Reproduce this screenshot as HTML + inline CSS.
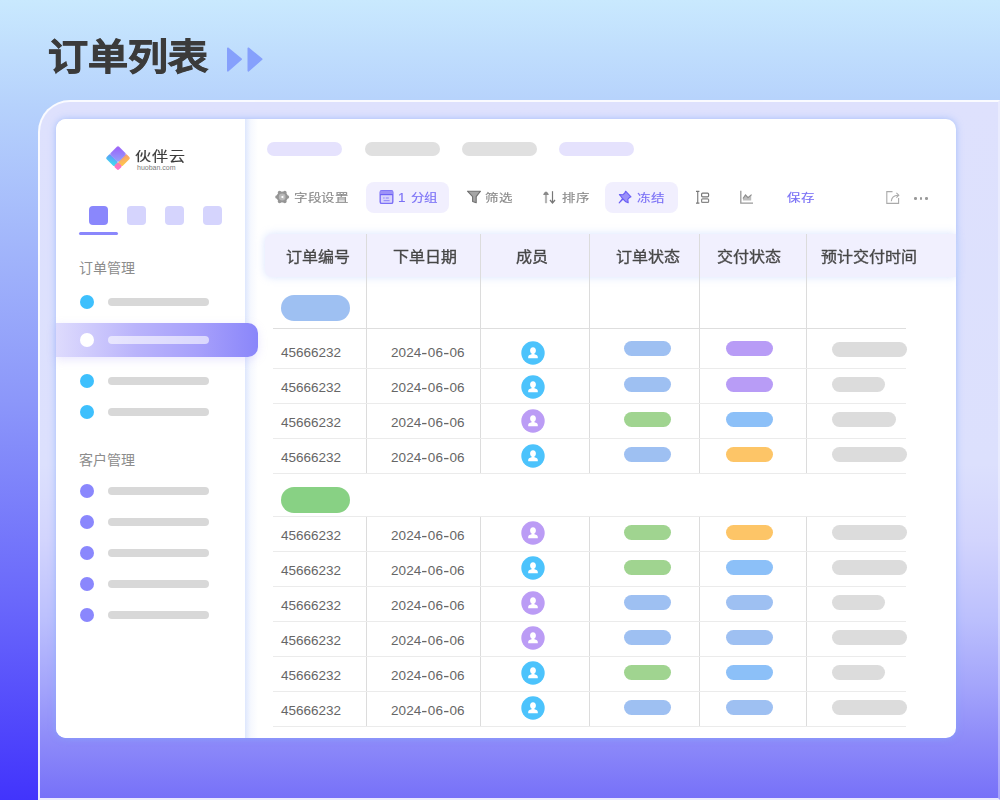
<!DOCTYPE html>
<html lang="zh-CN">
<head>
<meta charset="utf-8">
<style>
*{margin:0;padding:0;box-sizing:border-box;}
html,body{width:1000px;height:800px;overflow:hidden;}
body{position:relative;font-family:"Liberation Sans",sans-serif;
 background:linear-gradient(180deg,#c9e9fe 0%,#b6d2fc 13%,#8c97fa 50%,#6a68fb 75%,#4234fc 100%);}
.a{position:absolute;}
.title{left:48px;top:28px;font-size:40px;font-weight:900;color:#3b3b3b;line-height:56px;letter-spacing:0px;transform:scaleY(0.92);transform-origin:0 40px;-webkit-text-stroke:0.9px #3b3b3b;}
.panel{left:38px;top:100px;width:962px;height:700px;border:2px solid rgba(255,255,255,0.85);border-radius:32px 0 0 0;
 background:linear-gradient(180deg,#dee1fd 0%,#dce0fd 52%,#d2d4fd 63%,#bcc0fd 74%,#a3a4fb 84%,#8f8cf9 91%,#7670f8 100%) border-box;border-right-color:rgba(255,255,255,0.35);}
.card{left:56px;top:119px;width:900px;height:619px;background:#fff;border-radius:10px;overflow:hidden;box-shadow:0 0 7px rgba(130,170,250,0.65);}
.side{left:0;top:0;width:189px;height:619px;background:#fff;}
.pill{position:absolute;border-radius:99px;}
.txt{position:absolute;white-space:nowrap;}
</style>
</head>
<body>
<div class="a title">订单列表</div>
<svg class="a" style="left:226px;top:46px" width="38" height="26" viewBox="0 0 38 26">
 <path d="M1.8 2.2 L15.2 13.2 L1.8 24.8 Z" fill="#86a0fc" stroke="#86a0fc" stroke-width="1.6" stroke-linejoin="round"/>
 <path d="M22.3 2.2 L35.7 13.2 L22.3 24.8 Z" fill="#86a0fc" stroke="#86a0fc" stroke-width="1.6" stroke-linejoin="round"/>
</svg>
<div class="a panel"></div>
<div class="a card">
 <div class="a side"></div>
</div>

<div class="a" style="left:245px;top:119px;width:13px;height:619px;background:linear-gradient(90deg,rgba(222,231,253,1),rgba(240,244,254,0.6) 45%,rgba(255,255,255,0) 100%);"></div>
<svg class="a" style="left:104px;top:144px" width="28" height="28" viewBox="0 0 28 28">
 <defs>
  <linearGradient id="gp" x1="0" y1="0" x2="1" y2="1"><stop offset="0" stop-color="#9c5cfa"/><stop offset="1" stop-color="#93a3fb"/></linearGradient>
  <linearGradient id="gb" x1="0" y1="0" x2="1" y2="1"><stop offset="0" stop-color="#5f95f6"/><stop offset="1" stop-color="#3ee3f1"/></linearGradient>
  <linearGradient id="go" x1="0" y1="0" x2="1" y2="1"><stop offset="0" stop-color="#f79b72"/><stop offset="1" stop-color="#ffcb47"/></linearGradient>
  <linearGradient id="gk" x1="0" y1="0" x2="1" y2="1"><stop offset="0" stop-color="#fb7ca8"/><stop offset="1" stop-color="#ff6fcf"/></linearGradient>
 </defs>
 <g transform="translate(14,1.6) rotate(45)">
  <rect x="0" y="11.6" width="12" height="6" rx="1.6" fill="url(#gb)"/>
  <rect x="11.6" y="0" width="6" height="12" rx="1.6" fill="url(#go)"/>
  <rect x="11.6" y="11.6" width="6" height="6" rx="1.6" fill="url(#gk)"/>
  <rect x="0" y="0" width="12" height="12" rx="2" fill="url(#gp)" style="filter:drop-shadow(0.5px 0.5px 0.4px rgba(90,60,160,0.35))"/>
 </g>
</svg>
<div class="txt" style="left:135px;top:145px;font-size:16px;line-height:22px;color:#3c3c3c;letter-spacing:0.8px;-webkit-text-stroke:0.2px #3c3c3c;transform:scaleY(0.82);transform-origin:0 18px;">伙伴云</div>
<div class="txt" style="left:137px;top:163px;font-size:7px;line-height:9px;color:#7a7a7a;letter-spacing:0px;">huoban.com</div>
<div class="a" style="left:89px;top:206px;width:19px;height:19px;border-radius:4px;background:#8a87fc"></div>
<div class="a" style="left:127px;top:206px;width:19px;height:19px;border-radius:4px;background:#d5d4fd"></div>
<div class="a" style="left:165px;top:206px;width:19px;height:19px;border-radius:4px;background:#d5d4fd"></div>
<div class="a" style="left:203px;top:206px;width:19px;height:19px;border-radius:4px;background:#d5d4fd"></div>
<div class="a" style="left:79px;top:232px;width:39px;height:3px;border-radius:2px;background:#8a87fc"></div>
<div class="txt" style="left:79px;top:258px;font-size:14px;line-height:20px;color:#8c8c8c;">订单管理</div>
<div class="a" style="left:80px;top:295px;width:14px;height:14px;border-radius:50%;background:#3ec0fd"></div>
<div class="pill" style="left:108px;top:298px;width:101px;height:8px;background:#d8d8d8"></div>
<div class="a" style="left:56px;top:323px;width:202px;height:34px;border-radius:0 10px 10px 0;background:linear-gradient(90deg,#dedbfd 0%,#b9b3fb 40%,#a7a0fb 70%,#8a86fa 100%);box-shadow:0 3px 10px rgba(170,160,250,0.25);"></div>
<div class="a" style="left:80px;top:333px;width:14px;height:14px;border-radius:50%;background:#fff"></div>
<div class="pill" style="left:108px;top:336px;width:101px;height:8px;background:rgba(255,255,255,0.6)"></div>
<div class="a" style="left:80px;top:374px;width:14px;height:14px;border-radius:50%;background:#3ec0fd"></div>
<div class="pill" style="left:108px;top:377px;width:101px;height:8px;background:#d8d8d8"></div>
<div class="a" style="left:80px;top:405px;width:14px;height:14px;border-radius:50%;background:#3ec0fd"></div>
<div class="pill" style="left:108px;top:408px;width:101px;height:8px;background:#d8d8d8"></div>
<div class="txt" style="left:79px;top:450px;font-size:14px;line-height:20px;color:#8c8c8c;">客户管理</div>
<div class="a" style="left:80px;top:484px;width:14px;height:14px;border-radius:50%;background:#8a87fd"></div>
<div class="pill" style="left:108px;top:487px;width:101px;height:8px;background:#d8d8d8"></div>
<div class="a" style="left:80px;top:515px;width:14px;height:14px;border-radius:50%;background:#8a87fd"></div>
<div class="pill" style="left:108px;top:518px;width:101px;height:8px;background:#d8d8d8"></div>
<div class="a" style="left:80px;top:546px;width:14px;height:14px;border-radius:50%;background:#8a87fd"></div>
<div class="pill" style="left:108px;top:549px;width:101px;height:8px;background:#d8d8d8"></div>
<div class="a" style="left:80px;top:577px;width:14px;height:14px;border-radius:50%;background:#8a87fd"></div>
<div class="pill" style="left:108px;top:580px;width:101px;height:8px;background:#d8d8d8"></div>
<div class="a" style="left:80px;top:608px;width:14px;height:14px;border-radius:50%;background:#8a87fd"></div>
<div class="pill" style="left:108px;top:611px;width:101px;height:8px;background:#d8d8d8"></div>

<div class="pill" style="left:267px;top:142px;width:75px;height:14px;background:#e5e2fd"></div>
<div class="pill" style="left:365px;top:142px;width:75px;height:14px;background:#e0e0e0"></div>
<div class="pill" style="left:462px;top:142px;width:75px;height:14px;background:#e0e0e0"></div>
<div class="pill" style="left:559px;top:142px;width:75px;height:14px;background:#e5e2fd"></div>
<svg class="a" style="left:274px;top:189px" width="16" height="16" viewBox="0 0 16 16">
 <g fill="#959595">
  <circle cx="8.2" cy="8" r="5.6"/>
  <circle cx="13.4" cy="8" r="1.8"/><circle cx="10.8" cy="12.5" r="1.8"/><circle cx="5.6" cy="12.5" r="1.8"/>
  <circle cx="3" cy="8" r="1.8"/><circle cx="5.6" cy="3.5" r="1.8"/><circle cx="10.8" cy="3.5" r="1.8"/>
 </g>
 <circle cx="8.2" cy="8" r="3.4" fill="#b8b8b8"/>
 <path d="M6.6 8 L9.4 6.4 L9.4 9.6 Z" fill="#fff"/>
</svg>
<div class="txt" style="left:294px;top:188px;font-size:13.5px;line-height:20px;font-weight:500;letter-spacing:0.7px;-webkit-text-stroke-width:0.15px;transform:scaleY(0.88);transform-origin:0 16px;color:#8a8a8a;">字段设置</div>
<div class="a" style="left:366px;top:182px;width:83px;height:31px;border-radius:8px;background:#f1effe"></div>
<svg class="a" style="left:378px;top:189px" width="16" height="16" viewBox="0 0 16 16">
 <rect x="2.2" y="1.8" width="12.6" height="12.6" rx="1.5" fill="#d9d4fc" stroke="#7b6ff6" stroke-width="1.4"/>
 <rect x="2.2" y="1.8" width="12.6" height="4" rx="1.2" fill="#9d92f8"/>
 <line x1="2.2" y1="5.6" x2="14.8" y2="5.6" stroke="#6e62f5" stroke-width="1.2"/>
 <line x1="5.2" y1="9" x2="6.6" y2="9" stroke="#8a80f7" stroke-width="1"/>
 <line x1="7.8" y1="9" x2="10.8" y2="9" stroke="#8a80f7" stroke-width="1"/>
 <line x1="5.6" y1="11.7" x2="11.6" y2="11.7" stroke="#8a80f7" stroke-width="1"/>
</svg>
<div class="txt" style="left:398px;top:188px;font-size:13.5px;line-height:20px;font-weight:500;letter-spacing:0.7px;-webkit-text-stroke-width:0.15px;transform:scaleY(0.88);transform-origin:0 16px;color:#7a70f5;">1&nbsp;分组</div>
<svg class="a" style="left:466px;top:189px" width="16" height="16" viewBox="0 0 16 16">
 <path d="M1.5 2.2 L14.5 2.2 L10.2 7.6 L10.2 13.8 L6.6 12.6 L6.6 7.6 Z" fill="#a5a5a5" stroke="#707070" stroke-width="1.1" stroke-linejoin="round"/>
</svg>
<div class="txt" style="left:485px;top:188px;font-size:13.5px;line-height:20px;font-weight:500;letter-spacing:0.7px;-webkit-text-stroke-width:0.15px;transform:scaleY(0.88);transform-origin:0 16px;color:#8a8a8a;">筛选</div>
<svg class="a" style="left:542px;top:189px" width="16" height="16" viewBox="0 0 16 16">
 <path d="M4 14.2 L4 5" stroke="#b5b5b5" stroke-width="2.2"/>
 <path d="M1.2 6 C1.6 4.4 2.6 3 4 2.6 C5.4 3 6.4 4.4 6.8 6 Z" fill="#8a8a8a"/>
 <path d="M10.5 2.2 L10.5 13.6" stroke="#777" stroke-width="1.2"/>
 <path d="M8 11 L10.5 14 L13 11" fill="none" stroke="#777" stroke-width="1.3"/>
</svg>
<div class="txt" style="left:562px;top:188px;font-size:13.5px;line-height:20px;font-weight:500;letter-spacing:0.7px;-webkit-text-stroke-width:0.15px;transform:scaleY(0.88);transform-origin:0 16px;color:#8a8a8a;">排序</div>
<div class="a" style="left:605px;top:182px;width:73px;height:31px;border-radius:8px;background:#f1effe"></div>
<svg class="a" style="left:617px;top:189px" width="16" height="16" viewBox="0 0 16 16">
 <path d="M8.6 2.2 L14 7.8 L12.6 8.4 L10.8 10.4 L11.2 13.8 L8.8 12.8 L6 10 L2.2 13.8 L5.6 9.6 L3.6 7 L2.4 5.6 L5.8 5.8 L7.8 4 Z" fill="#9b90f9" stroke="#6a5ef5" stroke-width="1.1" stroke-linejoin="round"/>
</svg>
<div class="txt" style="left:637px;top:188px;font-size:13.5px;line-height:20px;font-weight:500;letter-spacing:0.7px;-webkit-text-stroke-width:0.15px;transform:scaleY(0.88);transform-origin:0 16px;color:#7a70f5;">冻结</div>
<svg class="a" style="left:694px;top:189px" width="16" height="16" viewBox="0 0 16 16">
 <path d="M3.7 2.5 L3.7 14" stroke="#8a8a8a" stroke-width="1.3"/>
 <path d="M2 2.3 L5.4 2.3 M2 14.2 L5.4 14.2" stroke="#777" stroke-width="1.2"/>
 <rect x="7.6" y="4.2" width="7" height="3.6" rx="1" fill="none" stroke="#777" stroke-width="1.2"/>
 <rect x="7.6" y="9.8" width="7" height="3.6" rx="1" fill="none" stroke="#888" stroke-width="1.2"/>
</svg>
<svg class="a" style="left:738px;top:189px" width="16" height="16" viewBox="0 0 16 16">
 <path d="M2.8 1.8 L2.8 14.2 L15 14.2" fill="none" stroke="#999" stroke-width="1.3"/>
 <path d="M5 11.5 L5 9 L7.5 5.8 L10 8.5 L13.2 5.8 L13.2 11.5 Z" fill="#bdbdbd"/>
 <path d="M5 9.5 L7.5 6 L10 8.6 L13.6 5.6" fill="none" stroke="#8e8e8e" stroke-width="1.2"/>
</svg>
<div class="txt" style="left:787px;top:188px;font-size:13.5px;line-height:20px;font-weight:500;letter-spacing:0.7px;-webkit-text-stroke-width:0.15px;transform:scaleY(0.88);transform-origin:0 16px;color:#7a70f5;">保存</div>
<svg class="a" style="left:884px;top:189px" width="18" height="18" viewBox="0 0 18 18">
 <path d="M8.5 2.6 L2.8 2.6 L2.8 14.4 L14.6 14.4 L14.6 9" fill="none" stroke="#aaa" stroke-width="1.1"/>
 <path d="M7.3 12.2 C7.6 8.6 10 6.4 14 6.2" fill="none" stroke="#aaa" stroke-width="1.1"/>
 <path d="M12.4 3.8 L14.8 6.2 L12.4 8.6" fill="none" stroke="#aaa" stroke-width="1.1"/>
</svg>
<div class="a" style="left:914.2px;top:197.2px;width:2.6px;height:2.6px;border-radius:50%;background:#999"></div>
<div class="a" style="left:919.7px;top:197.2px;width:2.6px;height:2.6px;border-radius:50%;background:#999"></div>
<div class="a" style="left:925.2px;top:197.2px;width:2.6px;height:2.6px;border-radius:50%;background:#999"></div>
<!--TABLE-->
<div class="a" style="left:265px;top:234px;width:691px;height:43px;border-radius:7px 0 0 7px;background:#f1f0fe;box-shadow:0 0 8px rgba(200,215,253,0.7);"></div>
<div class="txt" style="left:286px;top:244.5px;font-size:16px;line-height:24px;color:#474747;font-weight:500;-webkit-text-stroke:0.35px #474747;transform:scaleY(0.9);transform-origin:0 19px;">订单编号</div>
<div class="txt" style="left:392.5px;top:244.5px;font-size:16px;line-height:24px;color:#474747;font-weight:500;-webkit-text-stroke:0.35px #474747;transform:scaleY(0.9);transform-origin:0 19px;">下单日期</div>
<div class="txt" style="left:515.5px;top:244.5px;font-size:16px;line-height:24px;color:#474747;font-weight:500;-webkit-text-stroke:0.35px #474747;transform:scaleY(0.9);transform-origin:0 19px;">成员</div>
<div class="txt" style="left:615.5px;top:244.5px;font-size:16px;line-height:24px;color:#474747;font-weight:500;-webkit-text-stroke:0.35px #474747;transform:scaleY(0.9);transform-origin:0 19px;">订单状态</div>
<div class="txt" style="left:717px;top:244.5px;font-size:16px;line-height:24px;color:#474747;font-weight:500;-webkit-text-stroke:0.35px #474747;transform:scaleY(0.9);transform-origin:0 19px;">交付状态</div>
<div class="txt" style="left:821px;top:244.5px;font-size:16px;line-height:24px;color:#474747;font-weight:500;-webkit-text-stroke:0.35px #474747;transform:scaleY(0.9);transform-origin:0 19px;">预计交付时间</div>
<div class="a" style="left:366px;top:234px;width:1px;height:240px;background:#dcdcdc"></div>
<div class="a" style="left:366px;top:517px;width:1px;height:210px;background:#dcdcdc"></div>
<div class="a" style="left:480px;top:234px;width:1px;height:240px;background:#dcdcdc"></div>
<div class="a" style="left:480px;top:517px;width:1px;height:210px;background:#dcdcdc"></div>
<div class="a" style="left:589px;top:234px;width:1px;height:240px;background:#dcdcdc"></div>
<div class="a" style="left:589px;top:517px;width:1px;height:210px;background:#dcdcdc"></div>
<div class="a" style="left:699px;top:234px;width:1px;height:240px;background:#dcdcdc"></div>
<div class="a" style="left:699px;top:517px;width:1px;height:210px;background:#dcdcdc"></div>
<div class="a" style="left:806px;top:234px;width:1px;height:240px;background:#dcdcdc"></div>
<div class="a" style="left:806px;top:517px;width:1px;height:210px;background:#dcdcdc"></div>
<div class="pill" style="left:281px;top:295px;width:69px;height:26px;background:#9ec0f2"></div>
<div class="pill" style="left:281px;top:487px;width:69px;height:26px;background:#88d184"></div>
<div class="a" style="left:273px;top:328px;width:633px;height:1px;background:#dedede"></div>
<div class="a" style="left:273px;top:368px;width:633px;height:1px;background:#ebebeb"></div>
<div class="a" style="left:273px;top:403px;width:633px;height:1px;background:#ebebeb"></div>
<div class="a" style="left:273px;top:438px;width:633px;height:1px;background:#ebebeb"></div>
<div class="a" style="left:273px;top:473px;width:633px;height:1px;background:#ebebeb"></div>
<div class="a" style="left:273px;top:516px;width:633px;height:1px;background:#ebebeb"></div>
<div class="a" style="left:273px;top:551px;width:633px;height:1px;background:#ebebeb"></div>
<div class="a" style="left:273px;top:586px;width:633px;height:1px;background:#ebebeb"></div>
<div class="a" style="left:273px;top:621px;width:633px;height:1px;background:#ebebeb"></div>
<div class="a" style="left:273px;top:656px;width:633px;height:1px;background:#ebebeb"></div>
<div class="a" style="left:273px;top:691px;width:633px;height:1px;background:#ebebeb"></div>
<div class="a" style="left:273px;top:726px;width:633px;height:1px;background:#ebebeb"></div>
<div class="txt" style="left:281px;top:342.5px;font-size:13.5px;line-height:20px;color:#666;">45666232</div>
<div class="txt" style="left:391px;top:342.5px;font-size:13.5px;line-height:20px;color:#666;letter-spacing:0.1px;">2024<span style="display:inline-block;margin:0 0.9px;transform:scale(1.35,1.2)">-</span>06<span style="display:inline-block;margin:0 0.9px;transform:scale(1.35,1.2)">-</span>06</div>
<div class="a" style="left:520.5px;top:340.6px;width:24px;height:24px;"><svg width="24" height="24" viewBox="0 0 24 24" style="position:absolute;left:0;top:0"><circle cx="12" cy="12" r="11.7" fill="#4cc3fc"/><path d="M12 6.2 C13.9 6.2 14.9 7.6 14.9 9.5 C14.9 11 14.2 12.1 13.4 12.6 L13.4 13.3 C15.6 13.8 16.8 14.8 16.8 16 L16.8 17.3 L7.2 17.3 L7.2 16 C7.2 14.8 8.4 13.8 10.6 13.3 L10.6 12.6 C9.8 12.1 9.1 11 9.1 9.5 C9.1 7.6 10.1 6.2 12 6.2 Z" fill="#fff"/></svg></div>
<div class="pill" style="left:624px;top:341px;width:47px;height:14.5px;background:#9ec0f2"></div>
<div class="pill" style="left:726px;top:341px;width:47px;height:14.5px;background:#b89cf6"></div>
<div class="pill" style="left:832px;top:342px;width:75px;height:14.5px;background:#dcdcdc"></div>
<div class="txt" style="left:281px;top:377.5px;font-size:13.5px;line-height:20px;color:#666;">45666232</div>
<div class="txt" style="left:391px;top:377.5px;font-size:13.5px;line-height:20px;color:#666;letter-spacing:0.1px;">2024<span style="display:inline-block;margin:0 0.9px;transform:scale(1.35,1.2)">-</span>06<span style="display:inline-block;margin:0 0.9px;transform:scale(1.35,1.2)">-</span>06</div>
<div class="a" style="left:520.5px;top:374.7px;width:24px;height:24px;"><svg width="24" height="24" viewBox="0 0 24 24" style="position:absolute;left:0;top:0"><circle cx="12" cy="12" r="11.7" fill="#4cc3fc"/><path d="M12 6.2 C13.9 6.2 14.9 7.6 14.9 9.5 C14.9 11 14.2 12.1 13.4 12.6 L13.4 13.3 C15.6 13.8 16.8 14.8 16.8 16 L16.8 17.3 L7.2 17.3 L7.2 16 C7.2 14.8 8.4 13.8 10.6 13.3 L10.6 12.6 C9.8 12.1 9.1 11 9.1 9.5 C9.1 7.6 10.1 6.2 12 6.2 Z" fill="#fff"/></svg></div>
<div class="pill" style="left:624px;top:377px;width:47px;height:14.5px;background:#9ec0f2"></div>
<div class="pill" style="left:726px;top:377px;width:47px;height:14.5px;background:#b89cf6"></div>
<div class="pill" style="left:832px;top:377px;width:53px;height:14.5px;background:#dcdcdc"></div>
<div class="txt" style="left:281px;top:413px;font-size:13.5px;line-height:20px;color:#666;">45666232</div>
<div class="txt" style="left:391px;top:413px;font-size:13.5px;line-height:20px;color:#666;letter-spacing:0.1px;">2024<span style="display:inline-block;margin:0 0.9px;transform:scale(1.35,1.2)">-</span>06<span style="display:inline-block;margin:0 0.9px;transform:scale(1.35,1.2)">-</span>06</div>
<div class="a" style="left:520.5px;top:408.7px;width:24px;height:24px;"><svg width="24" height="24" viewBox="0 0 24 24" style="position:absolute;left:0;top:0"><circle cx="12" cy="12" r="11.7" fill="#bb9cf5"/><path d="M12 6.2 C13.9 6.2 14.9 7.6 14.9 9.5 C14.9 11 14.2 12.1 13.4 12.6 L13.4 13.3 C15.6 13.8 16.8 14.8 16.8 16 L16.8 17.3 L7.2 17.3 L7.2 16 C7.2 14.8 8.4 13.8 10.6 13.3 L10.6 12.6 C9.8 12.1 9.1 11 9.1 9.5 C9.1 7.6 10.1 6.2 12 6.2 Z" fill="#fff"/></svg></div>
<div class="pill" style="left:624px;top:412px;width:47px;height:14.5px;background:#a0d490"></div>
<div class="pill" style="left:726px;top:412px;width:47px;height:14.5px;background:#8cc0f8"></div>
<div class="pill" style="left:832px;top:412px;width:64px;height:14.5px;background:#dcdcdc"></div>
<div class="txt" style="left:281px;top:448px;font-size:13.5px;line-height:20px;color:#666;">45666232</div>
<div class="txt" style="left:391px;top:448px;font-size:13.5px;line-height:20px;color:#666;letter-spacing:0.1px;">2024<span style="display:inline-block;margin:0 0.9px;transform:scale(1.35,1.2)">-</span>06<span style="display:inline-block;margin:0 0.9px;transform:scale(1.35,1.2)">-</span>06</div>
<div class="a" style="left:520.5px;top:443.7px;width:24px;height:24px;"><svg width="24" height="24" viewBox="0 0 24 24" style="position:absolute;left:0;top:0"><circle cx="12" cy="12" r="11.7" fill="#4cc3fc"/><path d="M12 6.2 C13.9 6.2 14.9 7.6 14.9 9.5 C14.9 11 14.2 12.1 13.4 12.6 L13.4 13.3 C15.6 13.8 16.8 14.8 16.8 16 L16.8 17.3 L7.2 17.3 L7.2 16 C7.2 14.8 8.4 13.8 10.6 13.3 L10.6 12.6 C9.8 12.1 9.1 11 9.1 9.5 C9.1 7.6 10.1 6.2 12 6.2 Z" fill="#fff"/></svg></div>
<div class="pill" style="left:624px;top:447px;width:47px;height:14.5px;background:#9ec0f2"></div>
<div class="pill" style="left:726px;top:447px;width:47px;height:14.5px;background:#fdc567"></div>
<div class="pill" style="left:832px;top:447px;width:75px;height:14.5px;background:#dcdcdc"></div>
<div class="txt" style="left:281px;top:525.5px;font-size:13.5px;line-height:20px;color:#666;">45666232</div>
<div class="txt" style="left:391px;top:525.5px;font-size:13.5px;line-height:20px;color:#666;letter-spacing:0.1px;">2024<span style="display:inline-block;margin:0 0.9px;transform:scale(1.35,1.2)">-</span>06<span style="display:inline-block;margin:0 0.9px;transform:scale(1.35,1.2)">-</span>06</div>
<div class="a" style="left:520.5px;top:521.2px;width:24px;height:24px;"><svg width="24" height="24" viewBox="0 0 24 24" style="position:absolute;left:0;top:0"><circle cx="12" cy="12" r="11.7" fill="#bb9cf5"/><path d="M12 6.2 C13.9 6.2 14.9 7.6 14.9 9.5 C14.9 11 14.2 12.1 13.4 12.6 L13.4 13.3 C15.6 13.8 16.8 14.8 16.8 16 L16.8 17.3 L7.2 17.3 L7.2 16 C7.2 14.8 8.4 13.8 10.6 13.3 L10.6 12.6 C9.8 12.1 9.1 11 9.1 9.5 C9.1 7.6 10.1 6.2 12 6.2 Z" fill="#fff"/></svg></div>
<div class="pill" style="left:624px;top:525px;width:47px;height:14.5px;background:#a0d490"></div>
<div class="pill" style="left:726px;top:525px;width:47px;height:14.5px;background:#fdc567"></div>
<div class="pill" style="left:832px;top:525px;width:75px;height:14.5px;background:#dcdcdc"></div>
<div class="txt" style="left:281px;top:561px;font-size:13.5px;line-height:20px;color:#666;">45666232</div>
<div class="txt" style="left:391px;top:561px;font-size:13.5px;line-height:20px;color:#666;letter-spacing:0.1px;">2024<span style="display:inline-block;margin:0 0.9px;transform:scale(1.35,1.2)">-</span>06<span style="display:inline-block;margin:0 0.9px;transform:scale(1.35,1.2)">-</span>06</div>
<div class="a" style="left:520.5px;top:556px;width:24px;height:24px;"><svg width="24" height="24" viewBox="0 0 24 24" style="position:absolute;left:0;top:0"><circle cx="12" cy="12" r="11.7" fill="#4cc3fc"/><path d="M12 6.2 C13.9 6.2 14.9 7.6 14.9 9.5 C14.9 11 14.2 12.1 13.4 12.6 L13.4 13.3 C15.6 13.8 16.8 14.8 16.8 16 L16.8 17.3 L7.2 17.3 L7.2 16 C7.2 14.8 8.4 13.8 10.6 13.3 L10.6 12.6 C9.8 12.1 9.1 11 9.1 9.5 C9.1 7.6 10.1 6.2 12 6.2 Z" fill="#fff"/></svg></div>
<div class="pill" style="left:624px;top:560px;width:47px;height:14.5px;background:#a0d490"></div>
<div class="pill" style="left:726px;top:560px;width:47px;height:14.5px;background:#8cc0f8"></div>
<div class="pill" style="left:832px;top:560px;width:75px;height:14.5px;background:#dcdcdc"></div>
<div class="txt" style="left:281px;top:596px;font-size:13.5px;line-height:20px;color:#666;">45666232</div>
<div class="txt" style="left:391px;top:596px;font-size:13.5px;line-height:20px;color:#666;letter-spacing:0.1px;">2024<span style="display:inline-block;margin:0 0.9px;transform:scale(1.35,1.2)">-</span>06<span style="display:inline-block;margin:0 0.9px;transform:scale(1.35,1.2)">-</span>06</div>
<div class="a" style="left:520.5px;top:591.2px;width:24px;height:24px;"><svg width="24" height="24" viewBox="0 0 24 24" style="position:absolute;left:0;top:0"><circle cx="12" cy="12" r="11.7" fill="#bb9cf5"/><path d="M12 6.2 C13.9 6.2 14.9 7.6 14.9 9.5 C14.9 11 14.2 12.1 13.4 12.6 L13.4 13.3 C15.6 13.8 16.8 14.8 16.8 16 L16.8 17.3 L7.2 17.3 L7.2 16 C7.2 14.8 8.4 13.8 10.6 13.3 L10.6 12.6 C9.8 12.1 9.1 11 9.1 9.5 C9.1 7.6 10.1 6.2 12 6.2 Z" fill="#fff"/></svg></div>
<div class="pill" style="left:624px;top:595px;width:47px;height:14.5px;background:#9ec0f2"></div>
<div class="pill" style="left:726px;top:595px;width:47px;height:14.5px;background:#9ec0f2"></div>
<div class="pill" style="left:832px;top:595px;width:53px;height:14.5px;background:#dcdcdc"></div>
<div class="txt" style="left:281px;top:631px;font-size:13.5px;line-height:20px;color:#666;">45666232</div>
<div class="txt" style="left:391px;top:631px;font-size:13.5px;line-height:20px;color:#666;letter-spacing:0.1px;">2024<span style="display:inline-block;margin:0 0.9px;transform:scale(1.35,1.2)">-</span>06<span style="display:inline-block;margin:0 0.9px;transform:scale(1.35,1.2)">-</span>06</div>
<div class="a" style="left:520.5px;top:626px;width:24px;height:24px;"><svg width="24" height="24" viewBox="0 0 24 24" style="position:absolute;left:0;top:0"><circle cx="12" cy="12" r="11.7" fill="#bb9cf5"/><path d="M12 6.2 C13.9 6.2 14.9 7.6 14.9 9.5 C14.9 11 14.2 12.1 13.4 12.6 L13.4 13.3 C15.6 13.8 16.8 14.8 16.8 16 L16.8 17.3 L7.2 17.3 L7.2 16 C7.2 14.8 8.4 13.8 10.6 13.3 L10.6 12.6 C9.8 12.1 9.1 11 9.1 9.5 C9.1 7.6 10.1 6.2 12 6.2 Z" fill="#fff"/></svg></div>
<div class="pill" style="left:624px;top:630px;width:47px;height:14.5px;background:#9ec0f2"></div>
<div class="pill" style="left:726px;top:630px;width:47px;height:14.5px;background:#9ec0f2"></div>
<div class="pill" style="left:832px;top:630px;width:75px;height:14.5px;background:#dcdcdc"></div>
<div class="txt" style="left:281px;top:666px;font-size:13.5px;line-height:20px;color:#666;">45666232</div>
<div class="txt" style="left:391px;top:666px;font-size:13.5px;line-height:20px;color:#666;letter-spacing:0.1px;">2024<span style="display:inline-block;margin:0 0.9px;transform:scale(1.35,1.2)">-</span>06<span style="display:inline-block;margin:0 0.9px;transform:scale(1.35,1.2)">-</span>06</div>
<div class="a" style="left:520.5px;top:661px;width:24px;height:24px;"><svg width="24" height="24" viewBox="0 0 24 24" style="position:absolute;left:0;top:0"><circle cx="12" cy="12" r="11.7" fill="#4cc3fc"/><path d="M12 6.2 C13.9 6.2 14.9 7.6 14.9 9.5 C14.9 11 14.2 12.1 13.4 12.6 L13.4 13.3 C15.6 13.8 16.8 14.8 16.8 16 L16.8 17.3 L7.2 17.3 L7.2 16 C7.2 14.8 8.4 13.8 10.6 13.3 L10.6 12.6 C9.8 12.1 9.1 11 9.1 9.5 C9.1 7.6 10.1 6.2 12 6.2 Z" fill="#fff"/></svg></div>
<div class="pill" style="left:624px;top:665px;width:47px;height:14.5px;background:#a0d490"></div>
<div class="pill" style="left:726px;top:665px;width:47px;height:14.5px;background:#8cc0f8"></div>
<div class="pill" style="left:832px;top:665px;width:53px;height:14.5px;background:#dcdcdc"></div>
<div class="txt" style="left:281px;top:701px;font-size:13.5px;line-height:20px;color:#666;">45666232</div>
<div class="txt" style="left:391px;top:701px;font-size:13.5px;line-height:20px;color:#666;letter-spacing:0.1px;">2024<span style="display:inline-block;margin:0 0.9px;transform:scale(1.35,1.2)">-</span>06<span style="display:inline-block;margin:0 0.9px;transform:scale(1.35,1.2)">-</span>06</div>
<div class="a" style="left:520.5px;top:695.7px;width:24px;height:24px;"><svg width="24" height="24" viewBox="0 0 24 24" style="position:absolute;left:0;top:0"><circle cx="12" cy="12" r="11.7" fill="#4cc3fc"/><path d="M12 6.2 C13.9 6.2 14.9 7.6 14.9 9.5 C14.9 11 14.2 12.1 13.4 12.6 L13.4 13.3 C15.6 13.8 16.8 14.8 16.8 16 L16.8 17.3 L7.2 17.3 L7.2 16 C7.2 14.8 8.4 13.8 10.6 13.3 L10.6 12.6 C9.8 12.1 9.1 11 9.1 9.5 C9.1 7.6 10.1 6.2 12 6.2 Z" fill="#fff"/></svg></div>
<div class="pill" style="left:624px;top:700px;width:47px;height:14.5px;background:#9ec0f2"></div>
<div class="pill" style="left:726px;top:700px;width:47px;height:14.5px;background:#9ec0f2"></div>
<div class="pill" style="left:832px;top:700px;width:75px;height:14.5px;background:#dcdcdc"></div>
</body>
</html>
